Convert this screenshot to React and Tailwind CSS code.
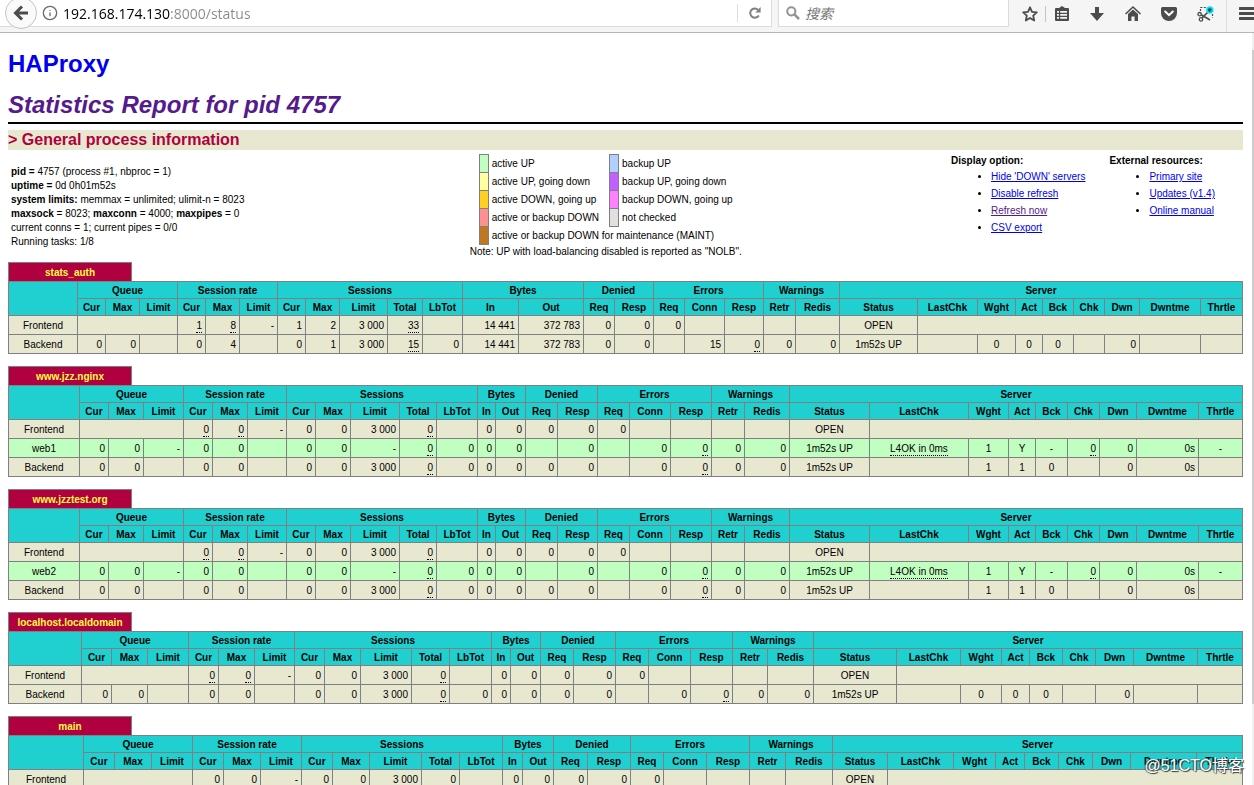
import React from 'react';
import { Info } from 'lucide-react';

const HEAD_GROUPS = [
  { label: 'Queue', cols: ['Cur', 'Max', 'Limit'] },
  { label: 'Session rate', cols: ['Cur', 'Max', 'Limit'] },
  { label: 'Sessions', cols: ['Cur', 'Max', 'Limit', 'Total', 'LbTot'] },
  { label: 'Bytes', cols: ['In', 'Out'] },
  { label: 'Denied', cols: ['Req', 'Resp'] },
  { label: 'Errors', cols: ['Req', 'Conn', 'Resp'] },
  { label: 'Warnings', cols: ['Retr', 'Redis'] },
  {
    label: 'Server',
    cols: ['Status', 'LastChk', 'Wght', 'Act', 'Bck', 'Chk', 'Dwn', 'Dwntme', 'Thrtle'],
  },
];

const tip = (value) => ({ value, tip: true });
const span = (colSpan) => ({ value: '', colSpan });
const mid = (value) => ({ value, center: true });

const frontend = (rate, rateMax, cur, max, total, bytesIn, bytesOut) => ({
  name: 'Frontend',
  cells: [
    span(3), tip(rate), tip(rateMax), '-', cur, max, '3 000', tip(total), '',
    bytesIn, bytesOut, '0', '0', '0', '', '', '', '', mid('OPEN'), span(8),
  ],
});

const webServer = (name) => ({
  name,
  active: true,
  cells: [
    '0', '0', '-', '0', '0', '', '0', '0', '-', tip('0'), '0', '0', '0', '', '0',
    '', '0', tip('0'), '0', '0', mid('1m52s UP'),
    { value: 'L4OK in 0ms', tip: true, center: true },
    mid('1'), mid('Y'), mid('-'), tip('0'), '0', '0s', mid('-'),
  ],
});

const backend = (rateMax, max, total, bytesIn, bytesOut, conn, weight, act, downtime) => ({
  name: 'Backend',
  cells: [
    '0', '0', '', '0', rateMax, '', '0', max, '3 000', tip(total), '0',
    bytesIn, bytesOut, '0', '0', '', conn, tip('0'), '0', '0', mid('1m52s UP'), '',
    mid(weight), mid(act), mid('0'), '', '0', downtime, '',
  ],
});

const WEB_WIDTHS = [
  71, 29, 35, 40, 29, 35, 39, 29, 35, 49, 37, 41, 18, 30, 32, 40, 32, 41, 41, 33, 45,
  80, 99, 40, 27, 32, 32, 37, 62, 44,
];

const PROXIES = [
  {
    name: 'stats_auth',
    widths: [
      69, 28, 34, 38, 28, 34, 38, 28, 34, 48, 35, 40, 56, 65, 31, 39, 31, 40, 39, 32, 44,
      78, 60, 38, 27, 31, 31, 35, 61, 42,
    ],
    rows: [
      frontend('1', '8', '1', '2', '33', '14 441', '372 783'),
      backend('4', '1', '15', '14 441', '372 783', '15', '0', '0', ''),
    ],
  },
  {
    name: 'www.jzz.nginx',
    widths: WEB_WIDTHS,
    rows: [
      frontend('0', '0', '0', '0', '0', '0', '0'),
      webServer('web1'),
      backend('0', '0', '0', '0', '0', '0', '1', '1', '0s'),
    ],
  },
  {
    name: 'www.jzztest.org',
    widths: WEB_WIDTHS,
    rows: [
      frontend('0', '0', '0', '0', '0', '0', '0'),
      webServer('web2'),
      backend('0', '0', '0', '0', '0', '0', '1', '1', '0s'),
    ],
  },
  {
    name: 'localhost.localdomain',
    widths: [
      73, 30, 36, 41, 30, 36, 40, 30, 36, 51, 38, 42, 19, 30, 33, 42, 33, 42, 42, 35, 46,
      83, 64, 41, 28, 33, 33, 38, 64, 45,
    ],
    rows: [
      frontend('0', '0', '0', '0', '0', '0', '0'),
      backend('0', '0', '0', '0', '0', '0', '0', '0', ''),
    ],
  },
  {
    name: 'main',
    widths: [
      75, 31, 37, 41, 31, 37, 41, 31, 37, 52, 38, 43, 20, 31, 34, 43, 33, 43, 43, 36, 47,
      55, 66, 42, 29, 34, 34, 38, 66, 46,
    ],
    rows: [frontend('0', '0', '0', '0', '0', '0', '0')],
  },
];

const LEGEND = [
  ['bg-[#c0ffc0]', 'active UP', 'bg-[#b0d0ff]', 'backup UP'],
  ['bg-[#ffffa0]', 'active UP, going down', 'bg-[#c060ff]', 'backup UP, going down'],
  ['bg-[#ffd020]', 'active DOWN, going up', 'bg-[#ff80ff]', 'backup DOWN, going up'],
  ['bg-[#ff9090]', 'active or backup DOWN', 'bg-[#e0e0e0]', 'not checked'],
];

const Toolbar = () => (
  <header className="flex h-[33px] shrink-0 items-start border-b border-[#b6b6b6] bg-[#f5f5f5] font-['Open_Sans','Noto_Sans_CJK_SC',sans-serif] text-[#4c4c4c]">
    <div className="flex h-[27px] min-w-0 flex-1 items-center border-r border-b border-[#dcdcdc] bg-white">
      <div className="w-[42px] shrink-0 pl-[5px]">
        <button
          aria-label="Back"
          className="flex h-8 w-8 items-center justify-center rounded-full border border-[#c4c4c4] bg-[#fafafa]"
        >
          <svg viewBox="0 0 16 16" className="h-4 w-4" fill="none" stroke="#4c4c4c" strokeWidth="3">
            <path d="M15 8H3M9 1.5L2.5 8L9 14.5" />
          </svg>
        </button>
      </div>
      <Info className="h-4 w-4 shrink-0 text-[#6a6a6a]" strokeWidth={2} />
      {/* host is drawn black, port and path grey */}
      <input
        aria-label="Address"
        className="ml-[5px] min-w-0 flex-1 bg-[linear-gradient(to_right,#000_107px,#8a8a8a_107px)] bg-clip-text text-[14px] text-transparent outline-none"
        defaultValue="192.168.174.130:8000/status"
      />
      <button
        aria-label="Reload"
        className="flex h-[18px] w-[34px] items-center justify-center border-l border-[#dcdcdc]"
      >
        <svg viewBox="0 0 12 12" className="h-3 w-3" fill="none" stroke="#808080" strokeWidth="2">
          <path d="M9.8 8.4A4.6 4.6 0 1 1 9 2.7" />
          <path d="M11.6 0v5.4H6.2z" fill="#808080" stroke="none" />
        </svg>
      </button>
    </div>

    <label className="ml-[6px] flex h-[27px] w-[231px] shrink-0 items-center gap-[5px] border-r border-b border-l border-[#dcdcdc] bg-white pl-[7px]">
      <svg viewBox="0 0 14 14" className="h-[14px] w-[14px] shrink-0" fill="none" stroke="#939393">
        <circle cx="5.3" cy="5.3" r="4.1" strokeWidth="2" />
        <path d="M8.4 8.4L13 13" strokeWidth="2.5" />
      </svg>
      <input
        placeholder="搜索"
        aria-label="搜索"
        className="w-full min-w-0 text-[14px] italic outline-none placeholder:text-[#757575]"
      />
    </label>

    <nav className="flex h-[27px] shrink-0 items-center pl-3">
      <button aria-label="Bookmark" className="flex w-[18px] justify-center">
        <svg viewBox="0 0 16 16" className="h-4 w-4" fill="none" stroke="#4c4c4c" strokeWidth="1.8" strokeLinejoin="round">
          <path d="M8 1.3l2 4.5 4.8.5-3.6 3.3 1 4.9L8 12l-4.2 2.5 1-4.9L1.2 6.3 6 5.8z" />
        </svg>
      </button>
      <span className="ml-[6px] h-4 w-px bg-[#c4c4c4]" />
      <button aria-label="Bookmarks menu" className="flex w-8 justify-center">
        <svg viewBox="0 0 14 15" className="h-[15px] w-[14px]" fill="#4c4c4c">
          <path fillRule="evenodd" d="M4 2L7 0l3 2h3a1 1 0 0 1 1 1v11a1 1 0 0 1-1 1H1a1 1 0 0 1-1-1V3a1 1 0 0 1 1-1zM2 5v1.8h2V5zm3.2 0v1.8H12V5zM2 8v1.8h2V8zm3.2 0v1.8H12V8zM2 11v1.8h2V11zm3.2 0v1.8H12V11z" />
        </svg>
      </button>
      <button aria-label="Downloads" className="flex w-9 justify-center pl-[2px]">
        <svg viewBox="0 0 14 14" className="h-[14px] w-[14px]" fill="#4c4c4c">
          <path d="M5 0h4v6h5l-7 8-7-8h5z" />
        </svg>
      </button>
      <button aria-label="Home" className="flex w-9 justify-center pl-[2px]">
        <svg viewBox="0 0 16 15" className="h-[15px] w-4" fill="#4c4c4c">
          <path d="M8 0l8 7.4-1.1 1.1L8 2.1 1.1 8.5 0 7.4z" />
          <path d="M8 3.4l5 4.6v7H9.6v-4.4H6.4V15H3V8z" />
        </svg>
      </button>
      <button aria-label="Pocket" className="flex w-9 justify-center pl-[2px]">
        <svg viewBox="0 0 16 14" className="h-[14px] w-4">
          <path d="M1.5 0h13A1.5 1.5 0 0 1 16 1.5V6A8 8 0 0 1 0 6V1.5A1.5 1.5 0 0 1 1.5 0z" fill="#4c4c4c" />
          <path d="M4.2 4.5L8 8.2l3.8-3.7" fill="none" stroke="#fff" strokeWidth="2" strokeLinecap="round" />
        </svg>
      </button>
      <button aria-label="Screenshot" className="flex w-9 justify-center pl-[2px]">
        <svg viewBox="0 0 17 16" className="h-4 w-[17px]" fill="none" stroke="#4c4c4c">
          <path d="M3.5 5V1.5H9M15.5 8v4" strokeWidth="1.2" strokeDasharray="2 1.4" />
          <circle cx="2.6" cy="8.2" r="1.7" strokeWidth="1.3" />
          <circle cx="4" cy="13.4" r="1.7" strokeWidth="1.3" />
          <path d="M4.2 8.8L13 14M5 12l6.5-6.5" strokeWidth="1.7" />
          <circle cx="12.8" cy="4" r="3.7" fill="#00e5f5" stroke="none" />
          <path d="M12.8 1.9v4.2M11 3l3.6 2M14.6 3L11 5" strokeWidth="1.1" stroke="#20405a" />
        </svg>
      </button>
      <span className="ml-1 h-8 w-px self-start bg-[#dcdcdc]" />
      <button aria-label="Menu" className="ml-3 flex w-[15px] justify-start">
        <svg viewBox="0 0 16 13" className="h-[13px] w-4 shrink-0" fill="#4c4c4c">
          <path d="M1 0h15v3H1a1 1 0 0 1 0-3zM1 5h15v3H1a1 1 0 0 1 0-3zM1 10h15v3H1a1 1 0 0 1 0-3z" />
        </svg>
      </button>
    </nav>
  </header>
);

const LinkList = ({ title, links }) => (
  <div className="pt-[2px] pr-6 leading-[17px] whitespace-nowrap">
    <b className="block h-4">{title}</b>
    <ul className="list-disc pl-[40px]">
      {links.map((link) => (
        <li key={link.label}>
          <a href="#" className={link.visited ? 'text-[#551a8b] underline' : 'text-[#0000ee] underline'}>
            {link.label}
          </a>
        </li>
      ))}
    </ul>
  </div>
);

const Swatch = ({ color }) => <td className={`h-[18px] w-[9px] border border-[#808080] ${color}`} />;

const Legend = () => (
  <div className="flex flex-1 flex-col items-center pt-1">
    <table className="border-collapse">
      <tbody>
        {LEGEND.map(([leftColor, left, rightColor, right]) => (
          <tr key={left}>
            <Swatch color={leftColor} />
            <td className="pr-[10px] pl-[3px]">{left}</td>
            <Swatch color={rightColor} />
            <td className="pl-[3px]">{right}</td>
          </tr>
        ))}
        <tr>
          <Swatch color="bg-[#c07820]" />
          <td colSpan={3} className="pl-[3px]">active or backup DOWN for maintenance (MAINT)</td>
        </tr>
      </tbody>
    </table>
    <p>Note: UP with load-balancing disabled is reported as "NOLB".</p>
  </div>
);

const Cell = ({ cell }) => {
  const { value, tip: hasTip, center, colSpan } = typeof cell === 'string' ? { value: cell } : cell;
  return (
    <td
      colSpan={colSpan}
      className={`border border-[#808080] pt-[2px] whitespace-nowrap ${center ? 'text-center' : 'pr-[3px] text-right'}`}
    >
      {hasTip ? <span className="border-b border-dotted border-black pb-px">{value}</span> : value}
    </td>
  );
};

const ProxyTable = ({ proxy }) => {
  const total = proxy.widths.reduce((sum, w) => sum + w, 0);
  return (
    <section className="mb-3">
      <h3 className="h-[19px] w-[124px] border border-b-0 border-[#808080] bg-[#b00040] text-center leading-[19px] font-bold text-[#ffff40]">
        {proxy.name}
      </h3>
      <table className="w-full table-fixed border-collapse">
        <colgroup>
          {proxy.widths.map((w, i) => (
            <col key={i} style={{ width: `${(w / total) * 100}%` }} />
          ))}
        </colgroup>
        <thead className="bg-[#20d0d0]">
          <tr className="h-[17px]">
            <th rowSpan={2} className="border border-[#808080]" />
            {HEAD_GROUPS.map((group) => (
              <th key={group.label} colSpan={group.cols.length} className="border border-[#808080] pt-[2px]">
                {group.label}
              </th>
            ))}
          </tr>
          <tr className="h-[17px]">
            {HEAD_GROUPS.map((group) =>
              group.cols.map((col) => (
                <th key={group.label + col} className="border border-[#808080] pt-[2px]">
                  {col}
                </th>
              ))
            )}
          </tr>
        </thead>
        <tbody>
          {proxy.rows.map((row) => (
            <tr key={row.name} className={`h-[19px] ${row.active ? 'bg-[#c0ffc0]' : 'bg-[#e8e8d0]'}`}>
              <td className="border border-[#808080] pt-[2px] text-center">{row.name}</td>
              {row.cells.map((cell, i) => (
                <Cell key={i} cell={cell} />
              ))}
            </tr>
          ))}
        </tbody>
      </table>
    </section>
  );
};

const App = () => {
  return (
    <div className="relative flex h-screen flex-col overflow-hidden bg-white text-black">
      <Toolbar />
      <div className="flex min-h-0 flex-1">
        <main className="min-w-0 flex-1 overflow-hidden pr-[9px] pl-2 font-['Liberation_Sans',Arial,sans-serif] text-[10px] leading-[14px]">
          <h1 className="pt-[17px] text-[24px] leading-[28px] font-bold text-[#0000ee]">
            <a href="#">HAProxy</a>
          </h1>
          <h2 className="pt-[13px] text-[24px] leading-[28px] font-bold text-[#551a8b] italic">
            <a href="#">Statistics Report for pid 4757</a>
          </h2>
          <hr className="mt-[3px] border-t-2 border-black" />
          <h3 className="mt-[6px] bg-[#e8e8d0] text-[16px] leading-[20px] font-bold text-[#b00040]">
            &gt; General process information
          </h3>

          <div className="flex h-[112px] pr-1">
            <p className="pt-[15px] pr-4 pl-[3px] whitespace-nowrap">
              <b>pid = </b>4757 (process #1, nbproc = 1)<br />
              <b>uptime = </b>0d 0h01m52s<br />
              <b>system limits:</b> memmax = unlimited; ulimit-n = 8023<br />
              <b>maxsock</b> = 8023; <b>maxconn</b> = 4000; <b>maxpipes</b> = 0<br />
              current conns = 1; current pipes = 0/0<br />
              Running tasks: 1/8
            </p>
            <Legend />
            <LinkList
              title="Display option:"
              links={[
                { label: "Hide 'DOWN' servers" },
                { label: 'Disable refresh' },
                { label: 'Refresh now', visited: true },
                { label: 'CSV export' },
              ]}
            />
            <LinkList
              title="External resources:"
              links={[{ label: 'Primary site' }, { label: 'Updates (v1.4)' }, { label: 'Online manual' }]}
            />
          </div>

          {PROXIES.map((proxy) => (
            <ProxyTable key={proxy.name} proxy={proxy} />
          ))}
        </main>
        <div className="flex w-[2px] flex-col bg-[#f0f0f0] pt-[17px]">
          <div className="h-[89%] bg-[#cdcdcd]" />
        </div>
      </div>
      <span className="absolute right-[10px] bottom-2 font-['Liberation_Sans','Noto_Sans_CJK_SC',sans-serif] text-[16px] leading-[22px] text-white [text-shadow:1px_1px_1px_#333,-1px_0_1px_#555]">
        @51CTO博客
      </span>
    </div>
  );
};

export default App;
